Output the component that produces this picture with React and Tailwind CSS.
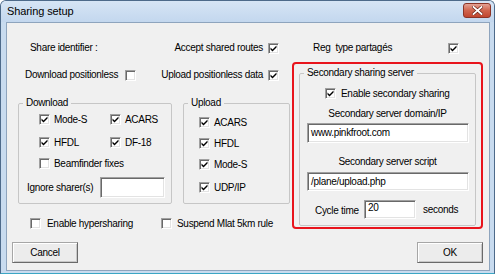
import React from "react";

const sunken =
  "bg-white border border-t-[#a0a0a0] border-l-[#a0a0a0] border-r-white border-b-white shadow-[inset_1px_1px_0_#696969,inset_-1px_-1px_0_#e3e3e3]";

const Check = ({ checked }) => (
  <span className={`w-[11px] h-[11px] shrink-0 flex items-center justify-center ${sunken}`}>
    {checked && (
      <svg width="9" height="9" viewBox="0 0 9 9">
        <polygon points="1.5,3.5 3.5,5.5 7.5,1.5 7.5,3.5 3.5,7.5 1.5,5.5" fill="#000" />
      </svg>
    )}
  </span>
);

const Input = ({ value, className }) => (
  <div className={`flex items-center pl-[3px] ${sunken} ${className}`}>{value}</div>
);

const Button = ({ children }) => (
  <button className="w-[66px] h-[21px] bg-[#ececec] border border-[#a6a6a6] border-r-[#6a6a6a] border-b-[#6a6a6a] shadow-[inset_1px_1px_0_#fff,inset_-1px_-1px_0_#c8c8c8] flex items-center justify-center">
    {children}
  </button>
);

const Group = ({ label, className, legendClass, children }) => (
  <fieldset className={`border border-[#c6c6c6] rounded-[2px] ${className}`}>
    <legend className={`px-[3px] leading-[12px] ${legendClass}`}>{label}</legend>
    {children}
  </fieldset>
);

export default function App() {
  return (
    <div className="w-[495px] h-[274px] bg-[#c8dbef] border border-[#4d6a8a] border-b-[#3aa6c4] rounded-t-[6px] flex flex-col overflow-hidden font-['Liberation_Sans',Arial,sans-serif] text-black">
      {/* title bar */}
      <div className="h-[21px] flex items-center justify-between pl-[6px] pr-[3px] bg-gradient-to-b from-[#d6e5f5] to-[#c3d7ee]">
        <span className="text-[11px] tracking-[-0.1px]">Sharing setup</span>
        <div className="w-[28px] h-[15px] rounded-[3px] border border-[#8b3427] bg-gradient-to-b from-[#e3a294] via-[#d0644d] to-[#c0462f] flex items-center justify-center mb-[2px]">
          <svg width="11" height="9" viewBox="0 0 11 9">
            <path d="M1.5 1 L9.5 8 M9.5 1 L1.5 8" stroke="#6b2418" strokeWidth="3.2" strokeLinecap="square" />
            <path d="M1.5 1 L9.5 8 M9.5 1 L1.5 8" stroke="#fff" strokeWidth="1.8" strokeLinecap="square" />
          </svg>
        </div>
      </div>

      {/* dialog body */}
      <div className="flex-1 ml-[5px] mr-[4px] mb-[2px] bg-[#f0f0f0] border border-[#8ea4bd] flex flex-col text-[10px] tracking-[-0.3px] leading-[12px]">
        {/* row 1 */}
        <div className="mt-[19px] h-[12px] flex items-center pl-[23px]">
          <span className="w-[100px]">Share identifier :</span>
          <span className="w-[133px] text-right">Accept shared routes</span>
          <span className="ml-[5px]"><Check checked /></span>
          <span className="ml-[34px] w-[135px]">Reg&nbsp; type partagés</span>
          <Check checked />
        </div>

        <div className="mt-[8px] flex">
          {/* left column */}
          <div className="w-[285px] flex flex-col">
            <div className="mt-[7px] h-[12px] flex items-center pl-[18px]">
              <span className="w-[100px]">Download positionless</span>
              <Check />
              <span className="w-[127px] text-right">Upload positionless data</span>
              <span className="ml-[5px]"><Check checked /></span>
            </div>

            <div className="mt-[16px] flex">
              <Group label="Download" className="ml-[11px] w-[154px] h-[107px]" legendClass="ml-[4px]">
                <div className="mt-[5px] h-[11px] flex items-center pl-[20px]">
                  <div className="w-[71px] flex items-center">
                    <Check checked />
                    <span className="ml-[4px]">Mode-S</span>
                  </div>
                  <Check checked />
                  <span className="ml-[4px]">ACARS</span>
                </div>
                <div className="mt-[12px] h-[11px] flex items-center pl-[20px]">
                  <div className="w-[71px] flex items-center">
                    <Check checked />
                    <span className="ml-[4px]">HFDL</span>
                  </div>
                  <Check checked />
                  <span className="ml-[4px]">DF-18</span>
                </div>
                <div className="mt-[10px] h-[11px] flex items-center pl-[20px]">
                  <Check />
                  <span className="ml-[4px]">Beamfinder fixes</span>
                </div>
                <div className="mt-[8px] flex items-center pl-[8px]">
                  <span className="w-[73px]">Ignore sharer(s)</span>
                  <Input className="w-[65px] h-[21px]" />
                </div>
              </Group>

              <Group label="Upload" className="ml-[11px] w-[107px] h-[107px]" legendClass="ml-[4px]">
                <div className="mt-[8px] h-[11px] flex items-center pl-[15px]">
                  <Check checked />
                  <span className="ml-[4px]">ACARS</span>
                </div>
                <div className="mt-[10px] h-[11px] flex items-center pl-[15px]">
                  <Check checked />
                  <span className="ml-[4px]">HFDL</span>
                </div>
                <div className="mt-[10px] h-[11px] flex items-center pl-[15px]">
                  <Check checked />
                  <span className="ml-[4px]">Mode-S</span>
                </div>
                <div className="mt-[12px] h-[11px] flex items-center pl-[15px]">
                  <Check checked />
                  <span className="ml-[4px]">UDP/IP</span>
                </div>
              </Group>
            </div>

            <div className="mt-[14px] h-[11px] flex items-center pl-[23px]">
              <div className="w-[131px] flex items-center">
                <Check />
                <span className="ml-[6px]">Enable hypersharing</span>
              </div>
              <Check />
              <span className="ml-[5px]">Suspend Mlat 5km rule</span>
            </div>
          </div>

          {/* highlighted secondary server box */}
          <div className="w-[191px] h-[167px] border-2 border-[#e8141c] rounded-[4px]">
            <Group
              label="Secondary sharing server"
              className="ml-[5px] mt-[3px] w-[177px] h-[159px]"
              legendClass="ml-[4px]"
            >
              <div className="mt-[9px] h-[11px] flex items-center pl-[25px]">
                <Check checked />
                <span className="ml-[5px]">Enable secondary sharing</span>
              </div>
              <div className="mt-[9px] h-[12px] text-center">Secondary server domain/IP</div>
              <Input value="www.pinkfroot.com" className="mt-[3px] ml-[7px] w-[162px] h-[20px]" />
              <div className="mt-[13px] h-[12px] text-center">Secondary server script</div>
              <Input value="/plane/upload.php" className="mt-[4px] ml-[7px] w-[162px] h-[19px]" />
              <div className="mt-[9px] flex items-center pl-[15px]">
                <span className="w-[49px] mt-[2px]">Cycle time</span>
                <Input value="20" className="w-[52px] h-[19px] !items-start pt-[1px]" />
                <span className="ml-[7px]">seconds</span>
              </div>
            </Group>
          </div>
        </div>

        {/* buttons */}
        <div className="mt-[13px] flex justify-between pl-[5px] pr-[6px]">
          <Button>Cancel</Button>
          <Button>OK</Button>
        </div>
      </div>
    </div>
  );
}
